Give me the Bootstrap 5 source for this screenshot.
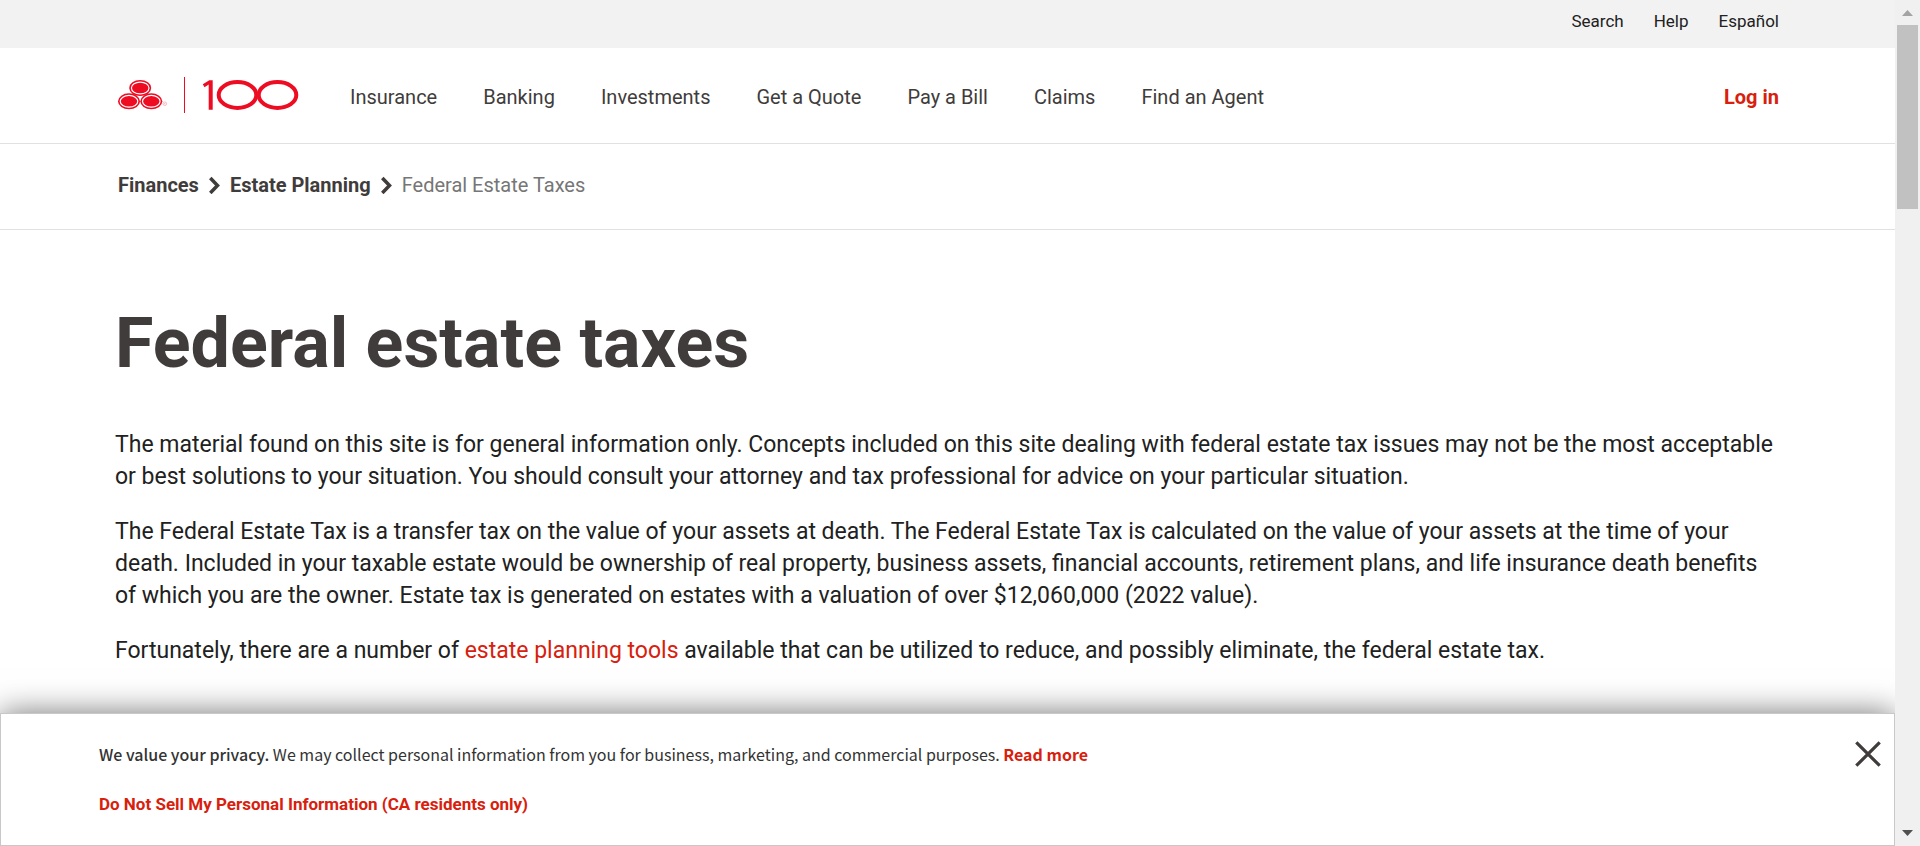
<!DOCTYPE html>
<html lang="en">
<head>
<meta charset="utf-8">
<meta name="viewport" content="width=device-width, initial-scale=1">
<title>Federal Estate Taxes</title>
<link href="https://cdn.jsdelivr.net/npm/bootstrap@5.3.0/dist/css/bootstrap.min.css" rel="stylesheet">
<style>
  :root { --brand: #d8200d; --ink: #403c3b; --rule: #e1e1e1; }
  body { font-family: Roboto, "Liberation Sans", sans-serif; color: #212121; background: #fff; }
  a { text-decoration: none; color: inherit; }
  a:hover { text-decoration: underline; }
  .wrap { max-width: 1687px; margin-inline: auto; padding-inline: 11px 12px; }
  .inset { padding-left: 3px; }
  .utility { background: #f2f2f2; height: 48px; font-size: 17px; line-height: 24px; padding-top: 9px; }
  .utility ul { gap: 30px; }
  .masthead { height: 96px; border-bottom: 1px solid var(--rule); font-size: 20px; line-height: 24px; color: var(--ink); }
  .masthead .wrap { width: 100%; }
  .masthead nav, .login { padding-top: 2px; }
  .main-links { gap: 46px; margin-left: 51px; }
  .brand-link { color: var(--brand); }
  .crumbs { height: 86px; border-bottom: 1px solid var(--rule); font-size: 20px; line-height: 24px; color: var(--ink); padding-top: 29px; }
  .crumbs ol { gap: 10px; }
  .crumbs .current { color: #767676; }
  h1 { font-size: 70px; line-height: 80px; font-weight: 700; color: var(--ink); margin: 73px 0 46px; }
  .article p { font-size: 23px; line-height: 32px; margin-bottom: 23px; }
  .privacy { left: 0; right: 0; bottom: 0; height: 133px; background: #fff; border: 1px solid #c8c8c8; box-shadow: 0 0 30px rgba(0,0,0,.55);
    font-family: "Noto Sans CJK SC", "Noto Sans", sans-serif; font-size: 16px; line-height: 24px; color: #333; padding: 28px 0 0 98px; }
  .privacy strong, .privacy .fw-medium { font-weight: 500; }
  .privacy p { margin-bottom: 25px; }
  .privacy .optout { font-family: Roboto, sans-serif; font-size: 17px; }
  .privacy .dismiss { position: absolute; top: 27px; right: 13px; line-height: 0; }
  .scroller { width: 25px; background: #f0f0f0; }
  .scroller .thumb { width: 21px; height: 184px; background: #c1c1c1; }
  .scroller svg { display: block; }
</style>
</head>
<body>
<div class="d-flex vh-100 overflow-hidden">
  <div class="flex-fill position-relative overflow-hidden">
    <div class="utility">
      <nav class="wrap" aria-label="Utility">
        <ul class="list-unstyled d-flex justify-content-end mb-0">
          <li><a href="#">Search</a></li>
          <li><a href="#">Help</a></li>
          <li><a href="#">Español</a></li>
        </ul>
      </nav>
    </div>
    <header class="masthead d-flex align-items-center">
      <div class="wrap d-flex align-items-center">
        <a href="#" class="inset" aria-label="Home">
          <svg class="d-block" width="181" height="37" viewBox="118 77 181 37" fill="none">
            <g fill="#ee0c23">
              <ellipse cx="129" cy="101.300" rx="11" ry="8"/><ellipse cx="151.300" cy="101.300" rx="11" ry="8"/><ellipse cx="140.200" cy="88" rx="11" ry="8"/>
            </g>
            <g fill="#ee0c23" stroke="#fff" stroke-width="1.200">
              <ellipse cx="129" cy="101.300" rx="8.800" ry="5.900"/><ellipse cx="151.300" cy="101.300" rx="8.800" ry="5.900"/><ellipse cx="140.200" cy="88" rx="8.800" ry="5.900"/>
            </g>
            <circle cx="164.800" cy="103.700" r="1.800" stroke="#f7a0a8" stroke-width=".7"/><circle cx="164.800" cy="103.700" r=".6" fill="#f7a0a8"/>
            <path d="M184.500 77v36" stroke="#ee0c23"/>
            <path d="M209.300 80.200H212.700V109.700H208.700V84.600L204.500 87.300 202.800 84.300z" fill="#ee0c23"/>
            <ellipse cx="237.500" cy="95" rx="18.800" ry="12.900" stroke="#ee0c23" stroke-width="4"/>
            <ellipse cx="277.500" cy="95" rx="18.800" ry="12.900" stroke="#ee0c23" stroke-width="4"/>
          </svg>
        </a>
        <nav class="flex-fill" aria-label="Main">
          <ul class="main-links list-unstyled d-flex mb-0">
            <li><a href="#">Insurance</a></li>
            <li><a href="#">Banking</a></li>
            <li><a href="#">Investments</a></li>
            <li><a href="#">Get a Quote</a></li>
            <li><a href="#">Pay a Bill</a></li>
            <li><a href="#">Claims</a></li>
            <li><a href="#">Find an Agent</a></li>
          </ul>
        </nav>
        <a href="#" class="login brand-link fw-bold">Log in</a>
      </div>
    </header>
    <nav class="crumbs" aria-label="Breadcrumb">
      <div class="wrap">
        <ol class="inset list-unstyled d-flex align-items-center mb-0">
          <li><a href="#" class="fw-bold">Finances</a></li>
          <li aria-hidden="true"><svg class="d-block" width="11" height="18" viewBox="0 0 11 18" fill="none" stroke="#403c3b" stroke-width="3.500"><path d="M1.300 2 8.500 9.500 1.300 17"/></svg></li>
          <li><a href="#" class="fw-bold">Estate Planning</a></li>
          <li aria-hidden="true"><svg class="d-block" width="11" height="18" viewBox="0 0 11 18" fill="none" stroke="#403c3b" stroke-width="3.500"><path d="M1.300 2 8.500 9.500 1.300 17"/></svg></li>
          <li class="current" aria-current="page">Federal Estate Taxes</li>
        </ol>
      </div>
    </nav>
    <main class="wrap article">
      <h1>Federal estate taxes</h1>
      <p>The material found on this site is for general information only. Concepts included on this site dealing with federal estate tax issues may not be the most acceptable or best solutions to your situation. You should consult your attorney and tax professional for advice on your particular situation.</p>
      <p>The Federal Estate Tax is a transfer tax on the value of your assets at death. The Federal Estate Tax is calculated on the value of your assets at the time of your death. Included in your taxable estate would be ownership of real property, business assets, financial accounts, retirement plans, and life insurance death benefits of which you are the owner. Estate tax is generated on estates with a valuation of over $12,060,000 (2022 value).</p>
      <p>Fortunately, there are a number of <a href="#" class="brand-link">estate planning tools</a> available that can be utilized to reduce, and possibly eliminate, the federal estate tax.</p>
    </main>
    <aside class="privacy position-absolute" aria-label="Privacy notice">
      <p><strong>We value your privacy.</strong> We may collect personal information from you for business, marketing, and commercial purposes. <a href="#" class="brand-link fw-bold">Read more</a></p>
      <a href="#" class="optout brand-link fw-bold">Do Not Sell My Personal Information (CA residents only)</a>
      <button type="button" class="dismiss border-0 bg-transparent p-0" aria-label="Close"><svg width="26" height="26" viewBox="0 0 26 26" stroke="#403c3b" stroke-width="3.200"><path d="M1.300 1.300 24.700 24.700M24.700 1.300 1.300 24.700"/></svg></button>
    </aside>
  </div>
  <div class="scroller d-flex flex-column align-items-center flex-shrink-0" aria-hidden="true">
    <svg width="25" height="25" viewBox="0 0 25 25"><path d="M7 16 12.500 10 18 16z" fill="#a3a3a3"/></svg>
    <div class="thumb"></div>
    <svg class="mt-auto" width="25" height="25" viewBox="0 0 25 25"><path d="M7 9 12.500 15 18 9z" fill="#505050"/></svg>
  </div>
</div>
<script src="https://cdn.jsdelivr.net/npm/bootstrap@5.3.0/dist/js/bootstrap.bundle.min.js"></script>
</body>
</html>
